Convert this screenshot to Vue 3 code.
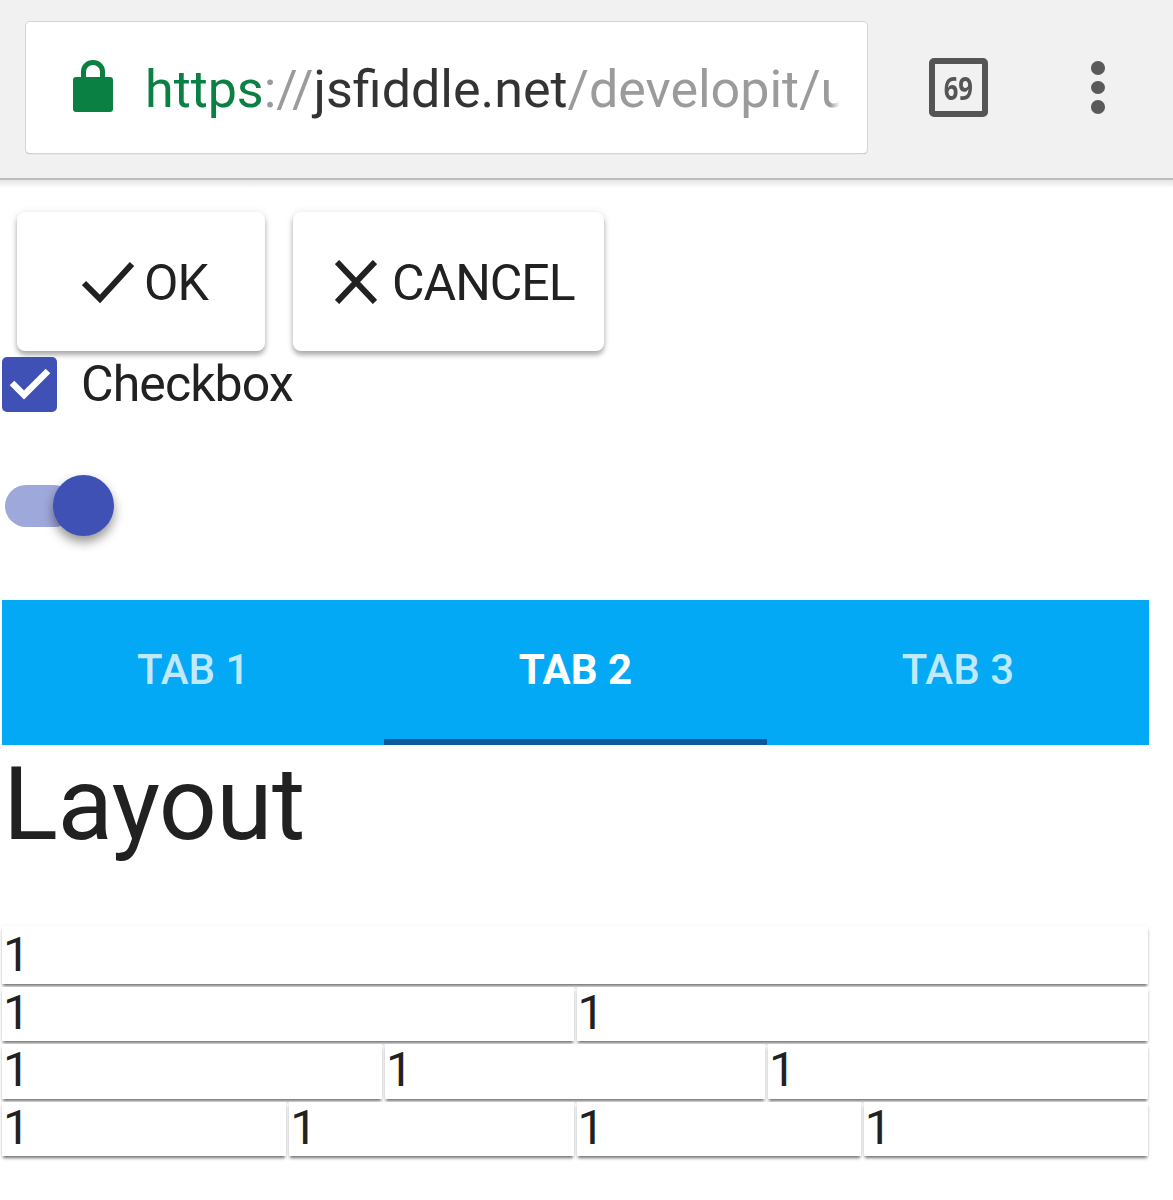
<script setup>
const tabs = [
  { label: 'TAB 1', active: false },
  { label: 'TAB 2', active: true },
  { label: 'TAB 3', active: false },
]
const rows = [1, 2, 3, 4]
</script>

<template>
  <div class="page">
    <header class="chrome">
      <div class="urlbar">
        <svg class="lock" viewBox="0 0 40 52" width="40" height="52">
          <path d="M3 17h34a3 3 0 0 1 3 3v29a3 3 0 0 1-3 3H3a3 3 0 0 1-3-3V20a3 3 0 0 1 3-3z" fill="#0b8043" />
          <path d="M10.500 20V11.500a9.500 9 0 0 1 19 0V20" fill="none" stroke="#0b8043" stroke-width="5" />
        </svg>
        <div class="url"><span class="green">https</span><span class="grey">://</span><span class="dark">jsfiddle.net</span><span class="grey">/developit/u</span></div>
      </div>
      <div class="tabcount"><span>69</span></div>
      <div class="dots"><i></i><i></i><i></i></div>
    </header>
    <div class="chrome-fade"></div>

    <main class="content">
      <div class="buttons">
        <button class="btn ok">
          <svg viewBox="0 0 52 44" width="52" height="44"><path d="M2 23 L18 39 L50 4" fill="none" stroke="#212121" stroke-width="6" /></svg>
          <span>OK</span>
        </button>
        <button class="btn cancel">
          <svg viewBox="0 0 42 44" width="42" height="44"><path d="M2 2 L40 42 M40 2 L2 42" fill="none" stroke="#212121" stroke-width="6" /></svg>
          <span>CANCEL</span>
        </button>
      </div>

      <label class="check">
        <span class="box">
          <svg viewBox="0 0 55 55" width="55" height="55"><path d="M10 26 L22 38 L46 14" fill="none" stroke="#fff" stroke-width="6.500" /></svg>
        </span>
        <span>Checkbox</span>
      </label>

      <div class="switch"><span class="track"></span><span class="knob"></span></div>

      <nav class="tabs">
        <div v-for="t in tabs" :key="t.label" class="tab" :class="{ active: t.active }">{{ t.label }}</div>
      </nav>

      <h1 class="title">Layout</h1>

      <div class="grid">
        <div v-for="r in rows" :key="r" class="row">
          <div v-for="c in r" :key="c" class="col">1</div>
        </div>
      </div>
    </main>
  </div>
</template>

<style>
html, body { background: #fff; }
</style>

<style scoped>
.page {
  width: 1173px;
  height: 1200px;
  overflow: hidden;
  font-family: Roboto, sans-serif;
  color: #212121;
  background: #fff;
}

/* browser bar */
.chrome {
  height: 180px;
  box-sizing: border-box;
  background: #f1f1f1;
  border-bottom: 2px solid #bdbdbd;
  padding: 22px 0 0 26px;
  display: flex;
  align-items: flex-start;
}
.chrome-fade {
  height: 7px;
  background: linear-gradient(#e6e6ea, #fafafa);
}
.urlbar {
  flex: none;
  width: 841px;
  height: 131px;
  box-sizing: border-box;
  background: #fff;
  border-radius: 4px;
  box-shadow: 0 0 0 1px #d4d4d4, 0 1px 1px #999;
  padding-left: 47px;
  display: flex;
  align-items: center;
}
.lock { flex: none; margin-top: -3px; }
.url {
  margin-left: 32px;
  width: 695px;
  overflow: hidden;
  white-space: nowrap;
  font-size: 52px;
  line-height: 60px;
  margin-top: 5px;
  -webkit-mask-image: linear-gradient(to right, #000 685px, transparent 695px);
  mask-image: linear-gradient(to right, #000 685px, transparent 695px);
}
.green { color: #0b8043; }
.grey { color: #9b9b9b; }
.dark { color: #333; }
.tabcount {
  flex: none;
  margin: 36px 0 0 62px;
  width: 59px;
  height: 59px;
  box-sizing: border-box;
  border: 6px solid #555;
  border-radius: 5px;
  color: #555;
  font-family: "Open Sans", sans-serif;
  font-weight: 700;
  font-size: 32px;
  display: flex;
  align-items: center;
  justify-content: center;
}
.tabcount span { transform: scaleX(0.8); }
.dots {
  flex: none;
  margin: 39px 0 0 103px;
  display: flex;
  flex-direction: column;
  gap: 6px;
}
.dots i {
  display: block;
  width: 14px;
  height: 13.500px;
  border-radius: 50%;
  background: #5a5a5a;
}

/* page */
.content { padding: 25px 0 0 2px; width: 1147px; }
.buttons { display: flex; gap: 28px; padding-left: 15px; }
.btn {
  height: 139px;
  border: 0;
  border-radius: 8px;
  background: #fff;
  color: #212121;
  font-family: inherit;
  font-size: 50px;
  letter-spacing: -1px;
  box-shadow: 0 4px 5px rgba(0, 0, 0, 0.3), 0 0 8px rgba(0, 0, 0, 0.09);
  display: flex;
  align-items: center;
  padding: 2px 0 0;
}
.btn svg { margin-top: -2px; }
.ok { width: 248px; padding-left: 65px; gap: 10px; }
.cancel { width: 311px; padding-left: 42px; gap: 15px; }

.check {
  display: flex;
  align-items: flex-start;
  gap: 24px;
  margin-top: 6px;
  font-size: 50px;
  letter-spacing: -0.9px;
  line-height: 54px;
}
.box {
  width: 55px;
  height: 55px;
  background: #3f51b5;
  border-radius: 5px;
  display: block;
}
.box svg { display: block; }

.switch {
  position: relative;
  margin: 63px 0 0 3px;
  width: 110px;
  height: 61px;
}
.track {
  position: absolute;
  left: 0;
  top: 10px;
  width: 70px;
  height: 42px;
  border-radius: 21px;
  background: #9fa8da;
}
.knob {
  position: absolute;
  left: 48px;
  top: 0;
  width: 61px;
  height: 61px;
  border-radius: 50%;
  background: #3f51b5;
  box-shadow: 0 6px 11px rgba(0, 0, 0, 0.42);
}

.tabs {
  margin-top: 64px;
  height: 145px;
  background: #03a9f4;
  display: grid;
  grid-template-columns: repeat(3, 1fr);
}
.tab {
  display: flex;
  align-items: center;
  justify-content: center;
  padding-bottom: 6px;
  font-size: 42px;
  font-weight: 500;
  color: rgba(255, 255, 255, 0.75);
}
.tab.active {
  color: #fff;
  font-weight: 700;
  box-shadow: inset 0 -6px 0 #0b5a9e;
}

.title {
  margin: 1px 0 0;
  padding-left: 1px;
  font-size: 102px;
  letter-spacing: -0.5px;
  font-weight: 400;
  line-height: 116px;
}

.grid {
  margin-top: 64px;
  width: 1146px;
  display: flex;
  flex-direction: column;
  gap: 3px;
}
.row { display: flex; gap: 3px; }
.row:first-child .col { height: 58px; padding-top: 3px; box-sizing: border-box; }
.col {
  flex: 1 1 0;
  height: 54.300px;
  padding-left: 1px;
  font-size: 48px;
  line-height: 52px;
  background: #fff;
  box-shadow: 0 3px 3px -1px rgba(0, 0, 0, 0.55), 0 0 4px rgba(0, 0, 0, 0.05);
}
</style>
